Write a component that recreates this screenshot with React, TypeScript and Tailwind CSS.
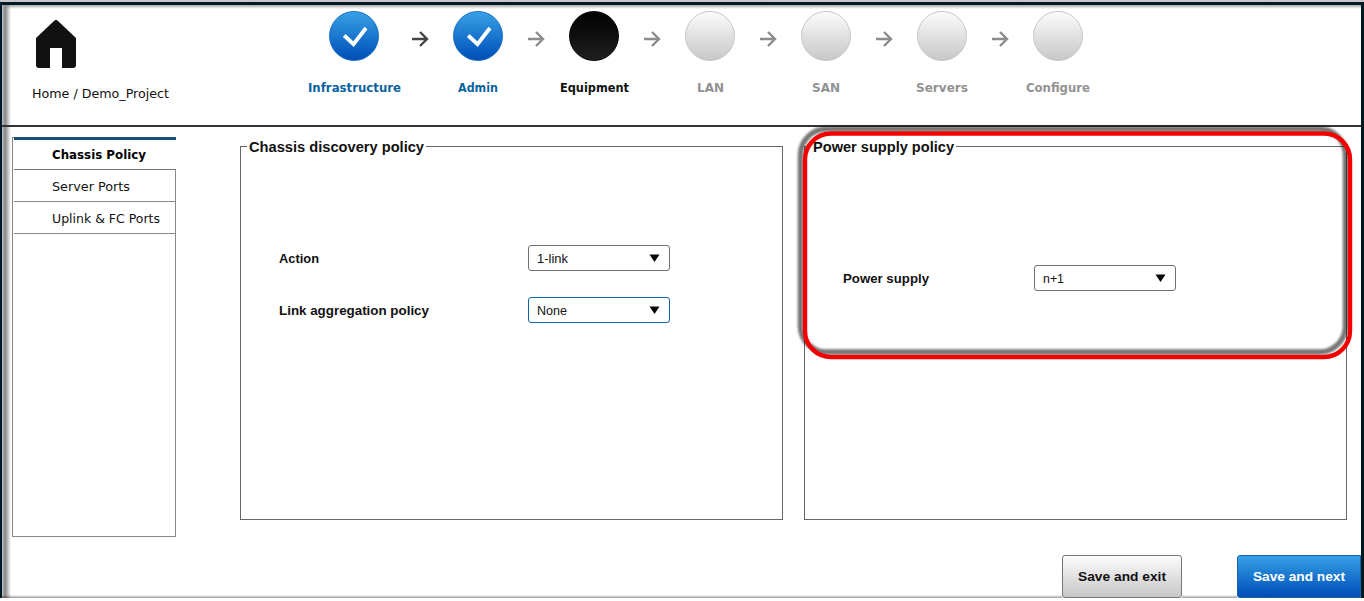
import React from "react";

type StepState = "done" | "current" | "pending";

const steps: { label: string; state: StepState; cell: string }[] = [
  { label: "Infrastructure", state: "done", cell: "w-[124px]" },
  { label: "Admin", state: "done", cell: "w-[116px]" },
  { label: "Equipment", state: "current", cell: "w-[116px]" },
  { label: "LAN", state: "pending", cell: "w-[116px]" },
  { label: "SAN", state: "pending", cell: "w-[116px]" },
  { label: "Servers", state: "pending", cell: "w-[116px]" },
  { label: "Configure", state: "pending", cell: "w-[50px]" },
];

const circleStyle: Record<StepState, string> = {
  done: "border-[#1a70c4] bg-linear-to-b from-[#38a1e5] to-[#044cb8]",
  current: "border-[#080808] bg-linear-to-b from-[#030303] to-[#202020]",
  pending: "border-[#c6c6c6] bg-linear-to-b from-[#fcfcfc] to-[#c8c8c8]",
};

const labelStyle: Record<StepState, string> = {
  done: "text-[#0b63a0]",
  current: "text-[#111]",
  pending: "text-[#929292]",
};

const labelWidth: Record<string, number> = {
  Infrastructure: 93,
  Admin: 40,
  Equipment: 69,
  LAN: 27,
  SAN: 28,
  Servers: 52,
  Configure: 64,
};

/* A single line of text set to a fixed measure. */
function Txt({ w, size = 13, bold = false, font = "DejaVu Sans", children }: {
  w: number; size?: number; bold?: boolean; font?: string; children: string;
}) {
  return (
    <svg width={w} height="20" className="block shrink-0 overflow-visible" fill="currentColor">
      <text x="0" y="15" textLength={w} lengthAdjust="spacingAndGlyphs"
        fontFamily={`"${font}", sans-serif`} fontSize={size} fontWeight={bold ? 700 : 400}>
        {children}
      </text>
    </svg>
  );
}

function Arrow({ dark }: { dark: boolean }) {
  return (
    <svg width="17" height="16" viewBox="0 0 17 16" fill="none"
      className={dark ? "text-[#444]" : "text-[#8c8c8c]"}>
      <path d="M0 8H15M8 1L15 8L8 15" stroke="currentColor" strokeWidth="2.4" />
    </svg>
  );
}

function Select({ value, w, active = false }: { value: string; w: number; active?: boolean }) {
  return (
    <button type="button"
      className={`flex h-[26px] w-[142px] items-center justify-between rounded-[3px] border bg-white pr-[9px] pl-2 text-[#111] ${active ? "border-[#1267ac]" : "border-[#707070]"}`}>
      <Txt w={w} size={13.5} font="Liberation Sans">{value}</Txt>
      <svg width="11" height="8" viewBox="0 0 11 8"><path d="M0.5 0.5H10.5L5.5 8Z" fill="#080808" /></svg>
    </button>
  );
}

function Panel({ title, titleW, className, children }: {
  title: string; titleW: number; className: string; children: React.ReactNode;
}) {
  return (
    <section className={`flex h-[374px] w-[543px] flex-col border border-[#666] ${className}`}>
      <h2 className="-mt-[10px] ml-[6px] h-5 w-fit bg-white px-[2px] text-[#111]">
        <Txt w={titleW} size={14.5} bold font="Liberation Sans">{title}</Txt>
      </h2>
      {children}
    </section>
  );
}

export default function App() {
  return (
    <div className="relative h-[601px] w-[1364px] overflow-hidden bg-white text-[#111]">
      <header className="flex h-[127px] border-b-2 border-b-[#333]">
        <div className="w-[304px] shrink-0 pt-5 pl-8">
          <svg width="40" height="48" viewBox="0 0 40 48" className="ml-1 block">
            <path d="M0 18L18 1Q20 -1 22 1L40 18V45Q40 48 37 48H26V28H14V48H3Q0 48 0 45Z" fill="#111" />
          </svg>
          <div className="mt-[15px]"><Txt w={137}>Home / Demo_Project</Txt></div>
        </div>
        <nav className="flex pt-[11px] pl-[25px]">
          {steps.map((s, i) => (
            <div key={s.label} className={`flex shrink-0 ${s.cell}`}>
              <div className="flex w-[50px] shrink-0 flex-col items-center">
                <div className={`flex size-[50px] shrink-0 items-center justify-center rounded-full border ${circleStyle[s.state]}`}>
                  {s.state === "done" && (
                    <svg width="50" height="50" viewBox="0 0 50 50" fill="none" className="shrink-0">
                      <path d="M15.2 24.5L24.5 33.2L37 17" stroke="white" strokeWidth="3.8" />
                    </svg>
                  )}
                </div>
                <div className={`mt-[16px] ${labelStyle[s.state]}`}>
                  <Txt w={labelWidth[s.label]} bold>{s.label}</Txt>
                </div>
              </div>
              {i < steps.length - 1 && (
                <div className={i === 0 ? "ml-[33px] pt-5" : "ml-[25px] pt-5"}><Arrow dark={i === 0} /></div>
              )}
            </div>
          ))}
        </nav>
      </header>

      <main className="flex h-[410px] pt-[10px] pl-3">
        <aside className="h-[400px] w-[164px] shrink-0 border border-[#888]">
          <div className="-mt-px -mr-px ml-px h-[33px] border-t-[3px] border-b border-t-[#174f78] border-b-[#777] bg-white pt-[4px] pl-[38px] text-black">
            <Txt w={94} bold>Chassis Policy</Txt>
          </div>
          <div className="ml-px h-8 border-b border-[#888] pt-[6px] pl-[38px]"><Txt w={78}>Server Ports</Txt></div>
          <div className="ml-px h-8 border-b border-[#888] pt-[6px] pl-[38px]"><Txt w={108}>{"Uplink & FC Ports"}</Txt></div>
        </aside>

        <Panel title="Chassis discovery policy" titleW={175} className="mt-[9px] ml-16">
          <div className="mt-[88px] flex items-center pl-[38px]">
            <div className="w-[249px]"><Txt w={40} size={13.5} bold font="Liberation Sans">Action</Txt></div>
            <Select value="1-link" w={31} />
          </div>
          <div className="mt-[26px] flex items-center pl-[38px]">
            <div className="w-[249px]"><Txt w={150} size={13.5} bold font="Liberation Sans">Link aggregation policy</Txt></div>
            <Select value="None" w={30} active />
          </div>
        </Panel>

        <Panel title="Power supply policy" titleW={141} className="mt-[9px] ml-[21px]">
          <div className="mt-[108px] flex items-center pl-[38px]">
            <div className="w-[191px]"><Txt w={86} size={13.5} bold font="Liberation Sans">Power supply</Txt></div>
            <Select value="n+1" w={21} />
          </div>
        </Panel>
      </main>

      <footer className="flex justify-end gap-[55px] pt-[18px] pr-[3px]">
        <button type="button" className="flex h-[43px] w-[120px] items-center justify-center rounded-[3px] border border-[#777] bg-linear-to-b from-[#fdfdfd] to-[#c6c6c6] pb-px text-[#111]">
          <Txt w={88} size={13.5} bold font="Liberation Sans">Save and exit</Txt>
        </button>
        <button type="button" className="flex h-[43px] w-[124px] items-center justify-center rounded-l-[3px] border border-[#1764a8] bg-linear-to-b from-[#36a0e4] to-[#044cb8] pb-px text-white">
          <Txt w={92} size={13.5} bold font="Liberation Sans">Save and next</Txt>
        </button>
      </footer>

      {/* highlight callout */}
      <svg className="pointer-events-none absolute inset-0" width="1364" height="601" fill="none">
        <defs><filter id="soft" x="-5%" y="-5%" width="110%" height="110%"><feGaussianBlur stdDeviation="1.3" /></filter></defs>
        <rect x="800.5" y="129" width="545" height="223" rx="26" stroke="#000" strokeOpacity="0.54" strokeWidth="5.5" filter="url(#soft)" />
        <rect x="805" y="133.5" width="545" height="223.5" rx="26" stroke="#f40000" strokeWidth="4.4" />
      </svg>

      {/* window frame */}
      <div className="pointer-events-none absolute inset-x-0 top-0 h-[2px] bg-[#c9c3cb]" />
      <div className="pointer-events-none absolute inset-x-0 top-[2px] h-[3px] bg-[#001c22]" />
      <div className="pointer-events-none absolute inset-x-[2px] top-[5px] h-[4px] bg-linear-to-b from-[#aaa] to-transparent" />
      <div className="pointer-events-none absolute top-[5px] bottom-[3px] left-[2px] w-[9px] bg-linear-to-r from-[#c0c0c0] via-[#888] via-35% to-transparent" />
      <div className="pointer-events-none absolute top-[125px] left-[2px] h-[2px] w-[9px] bg-[#333]" />
      <div className="pointer-events-none absolute top-[2px] bottom-[3px] left-0 w-[2px] bg-[#001c2a]" />
      <div className="pointer-events-none absolute top-[2px] right-0 bottom-[3px] w-[3px] bg-[#001820]" />
      <div className="pointer-events-none absolute bottom-[3px] left-[2px] h-[3px] w-[1060px] bg-linear-to-b from-transparent to-black/40" />
      <div className="pointer-events-none absolute right-[127px] bottom-[3px] h-[3px] w-[55px] bg-linear-to-b from-transparent to-black/40" />
      <div className="pointer-events-none absolute inset-x-0 bottom-0 h-[3px] bg-white" />
    </div>
  );
}
